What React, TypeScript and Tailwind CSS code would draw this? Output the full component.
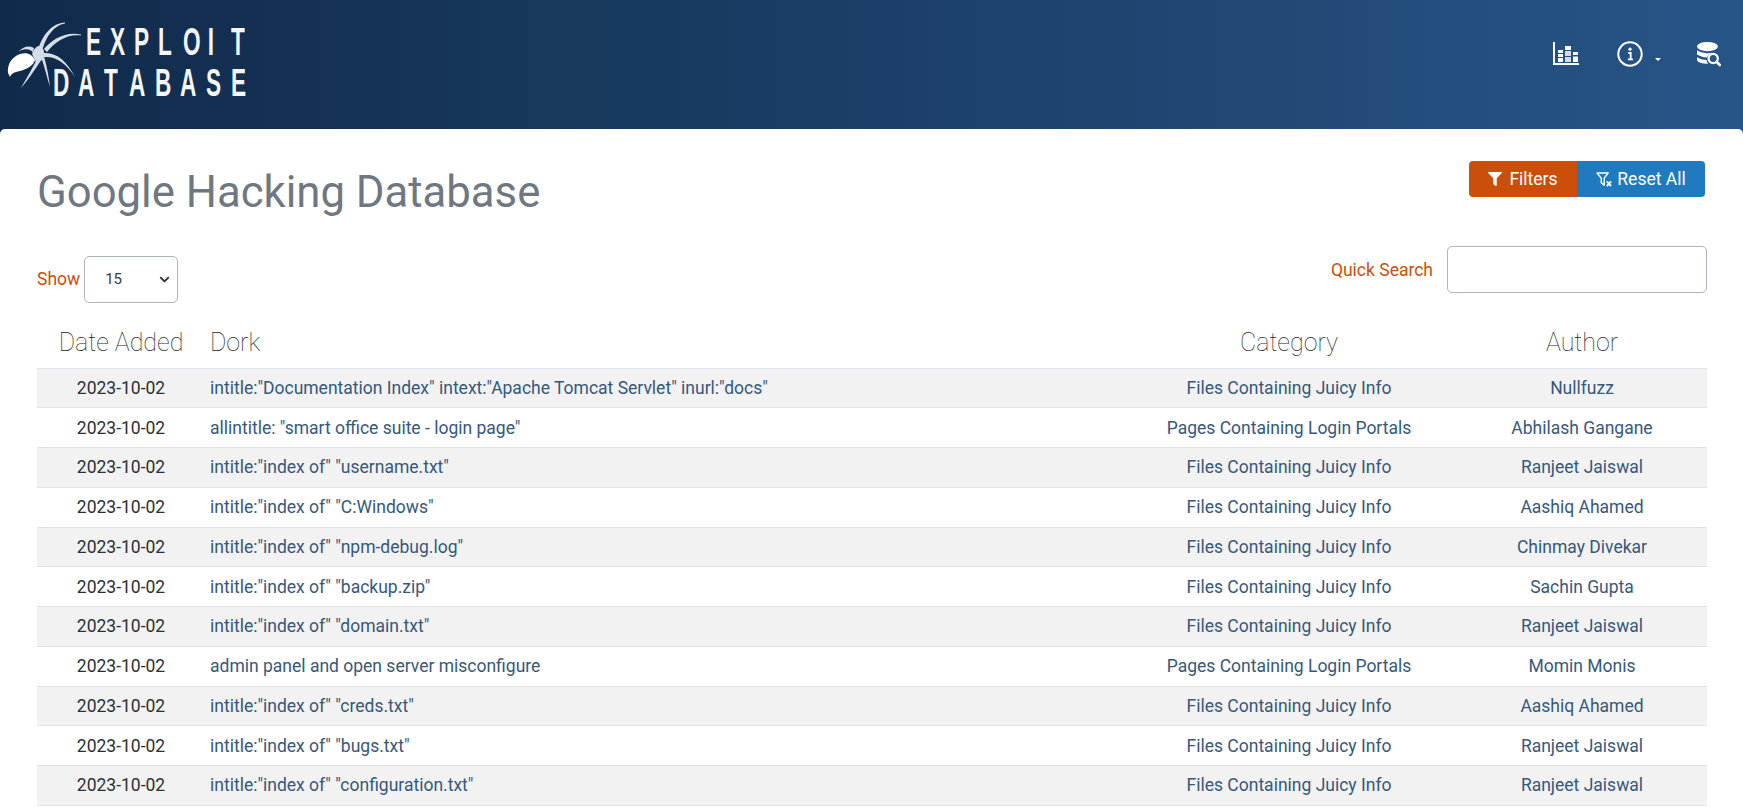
import React from 'react';
import { FaFilter } from 'react-icons/fa';
import { ChevronDown } from 'lucide-react';

const rows = [
    ['intitle:"Documentation Index" intext:"Apache Tomcat Servlet" inurl:"docs"', 'Files Containing Juicy Info', 'Nullfuzz'],
    ['allintitle: "smart office suite - login page"', 'Pages Containing Login Portals', 'Abhilash Gangane'],
    ['intitle:"index of" "username.txt"', 'Files Containing Juicy Info', 'Ranjeet Jaiswal'],
    ['intitle:"index of" "C:Windows"', 'Files Containing Juicy Info', 'Aashiq Ahamed'],
    ['intitle:"index of" "npm-debug.log"', 'Files Containing Juicy Info', 'Chinmay Divekar'],
    ['intitle:"index of" "backup.zip"', 'Files Containing Juicy Info', 'Sachin Gupta'],
    ['intitle:"index of" "domain.txt"', 'Files Containing Juicy Info', 'Ranjeet Jaiswal'],
    ['admin panel and open server misconfigure', 'Pages Containing Login Portals', 'Momin Monis'],
    ['intitle:"index of" "creds.txt"', 'Files Containing Juicy Info', 'Aashiq Ahamed'],
    ['intitle:"index of" "bugs.txt"', 'Files Containing Juicy Info', 'Ranjeet Jaiswal'],
    ['intitle:"index of" "configuration.txt"', 'Files Containing Juicy Info', 'Ranjeet Jaiswal'],
];

const Spider = () => (
    <svg viewBox="0 0 100 100" className="w-[100px] h-[100px] shrink-0" fill="#d5dde7" stroke="none">
        <path d="M8 73 C7 64 12 57 20 54 C27 52 32 54 35 60 C33 66 27 69 20 71 C14 72 11 74 10 77 Z" fill="white" />
        <path d="M32 54 C34 48 38 45 41 46 C45 50 45 56 42 60 L36 62 Z" />
        {/* legs taper from the body out to the tips */}
        <path d="M39 47 C43 35 52 23 65 22.5 L65 23.5 C54 25 46 37 43 48 Z" />
        <path d="M44 49 C52 39 66 31 81 34.5 L81 35.5 C67 33.5 55 42 47 52 Z" />
        <path d="M44 53 C56 52 67 61 75 77 C66 63 56 56 44 57 Z" />
        <path d="M41 57 L44 56 C47 67 49 78 50 87 C47 78 45 68 41 57 Z" />
        <path d="M38 57 L42 59 C34 71 28 80 21 88 C26 79 32 69 38 57 Z" />
        <path d="M34 48 C28 45 23 47 18 52 C23 49 28 48 33 52 Z" />
    </svg>
);

const Logo = () => (
    <div className="flex items-start font-['Liberation_Sans',sans-serif] font-bold text-[#f4f6f9]">
        <div className="absolute left-0 top-0">
            <Spider />
        </div>
        <div className="ml-[50px] mt-[22px] w-[192px]">
            <div className="flex justify-between pl-[33px] text-[39px] leading-[40px] h-[41px]">
                {'EXPLOIT'.split('').map((c, i) => (
                    <span key={i} className="inline-block w-[14px] text-center scale-x-[0.58]">{c}</span>
                ))}
            </div>
            <div className="flex justify-between text-[39px] leading-[40px]">
                {'DATABASE'.split('').map((c, i) => (
                    <span key={i} className="inline-block w-[14px] text-center scale-x-[0.58]">{c}</span>
                ))}
            </div>
        </div>
    </div>
);

const ChartIcon = () => (
    <svg viewBox="0 0 26 23" className="w-[26px] h-[23px] mt-[1px]" fill="white">
        <path d="M0 0h2v21H26v2H0z" />
        <rect x="5" y="8" width="5" height="3" />
        <rect x="5" y="12" width="5" height="3" />
        <rect x="5" y="16" width="5" height="4" />
        <rect x="12" y="4" width="6" height="4" />
        <rect x="12" y="9" width="6" height="5" opacity="0.8" />
        <rect x="12" y="15" width="6" height="5" opacity="0.8" />
        <rect x="20" y="10" width="5" height="3" />
        <rect x="20" y="14.5" width="5" height="5.5" />
    </svg>
);

const InfoIcon = () => (
    <svg viewBox="0 0 26 26" className="w-[26px] h-[26px]" fill="none" stroke="white">
        <circle cx="13" cy="13" r="11.7" strokeWidth="2" />
        <circle cx="13" cy="8.2" r="1.6" fill="white" stroke="none" />
        <path d="M11.3 12h2.4v6.2M11 18.4h5" strokeWidth="1.8" />
    </svg>
);

const DbSearchIcon = () => (
    <svg viewBox="0 0 24 25" className="w-[24px] h-[25px] mt-[1px]" fill="white">
        <ellipse cx="10.5" cy="4.6" rx="10.5" ry="4.6" />
        <path d="M0 8 C3 10.6 8 11.2 10.5 11.2 C12 11.2 13.5 11 15 10.7 C12.5 11.6 11 13.2 10 15.4 C6 15.2 2.5 14 0 12.4 Z" />
        <path d="M0 15.3 C2.5 17 6 17.8 9.6 18 C9.8 19.6 10.4 20.8 11.2 21.8 C5.5 21.8 0 20.2 0 18 Z" />
        <circle cx="16.2" cy="16.5" r="4.6" fill="none" stroke="white" strokeWidth="2.2" />
        <path d="M19.8 20l3 3" stroke="white" strokeWidth="2.6" strokeLinecap="round" />
    </svg>
);

const ResetIcon = () => (
    <svg viewBox="0 0 18 16" className="w-[17px] h-[15px]" fill="none" stroke="white">
        <path d="M1 1h12L8.7 6.5V14L5.5 11.5V6.5Z" strokeWidth="1.5" strokeLinejoin="round" />
        <path d="M11.5 10l4.5 5M16 10l-4.5 5" strokeWidth="1.9" />
    </svg>
);

export default function App() {
    return (
        <div className="relative h-[808px] overflow-hidden bg-gradient-to-r from-[#102a4a] to-[#275587] font-['Roboto',sans-serif]">
            <header className="h-[129px] flex justify-between">
                <Logo />
                <nav className="flex items-start pt-[41px] pr-[22px]">
                    <ChartIcon />
                    <div className="flex items-end ml-[38px]">
                        <InfoIcon />
                        <span className="ml-[12px] mb-[6px] border-x-[3px] border-t-[3px] border-x-transparent border-t-white" />
                    </div>
                    <div className="ml-[36px]">
                        <DbSearchIcon />
                    </div>
                </nav>
            </header>

            <main className="bg-white rounded-t-[5px] h-[679px] pl-[37px] pr-[36px]">
                <div className="flex justify-between items-start h-[117px]">
                    <h1 className="mt-[38px] text-[43.7px] leading-[50px] font-normal text-[#6f7881]">Google Hacking Database</h1>
                    <div className="flex mt-[32px] mr-[2px] text-[17.5px] text-white">
                        <button className="w-[108px] h-[36px] flex items-center justify-center gap-[7px] bg-[#cb4f0a] rounded-l-[4px]">
                            <FaFilter className="w-[14px] h-[14px]" />
                            Filters
                        </button>
                        <button className="w-[128px] h-[36px] flex items-center justify-center gap-[4px] bg-[#1f7bbd] rounded-r-[4px]">
                            <ResetIcon />
                            Reset All
                        </button>
                    </div>
                </div>

                <div className="flex justify-between items-start h-[77px]">
                    <div className="flex items-center mt-[10px] text-[17.5px]">
                        <span className="text-[#cb4f0a] mr-[4px]">Show</span>
                        <div className="relative">
                            <select className="block appearance-none w-[94px] h-[47px] pl-[20px] text-[15px] text-[#343a40] border border-[#adb5bd] rounded-[5px] bg-white">
                                <option>15</option>
                            </select>
                            <ChevronDown className="absolute right-[6px] top-[16px] w-[15px] h-[15px] text-[#2b3035]" strokeWidth={3} />
                        </div>
                    </div>
                    <div className="flex items-center">
                        <span className="text-[#cb4f0a] text-[17.5px] mr-[14px] mt-[2px]">Quick Search</span>
                        <input className="w-[260px] h-[47px] border border-[#adb5bd] rounded-[5px]" />
                    </div>
                </div>

                <table className="w-full table-fixed border-collapse">
                    <colgroup>
                        <col className="w-[168px]" />
                        <col />
                        <col className="w-[336px]" />
                        <col className="w-[250px]" />
                    </colgroup>
                    <thead>
                        <tr className="h-[45px] text-[25px] text-[#212529]">
                            <th className="font-thin align-top pt-[1px]">Date Added</th>
                            <th className="font-thin align-top pt-[1px] text-left pl-[5px]">Dork</th>
                            <th className="font-thin align-top pt-[1px]">Category</th>
                            <th className="font-thin align-top pt-[1px]">Author</th>
                        </tr>
                    </thead>
                    <tbody className="text-[17.5px] text-[#36587c]">
                        {rows.map((r, i) => (
                            <tr key={i} className={`h-[39.75px] border-y border-[#dee2e6] ${i % 2 === 0 ? 'bg-[#f2f2f3]' : 'bg-white'}`}>
                                <td className="text-center text-[#2b3035]">2023-10-02</td>
                                <td className="pl-[5px]">{r[0]}</td>
                                <td className="text-center">{r[1]}</td>
                                <td className="text-center">{r[2]}</td>
                            </tr>
                        ))}
                    </tbody>
                </table>
            </main>
        </div>
    );
}
